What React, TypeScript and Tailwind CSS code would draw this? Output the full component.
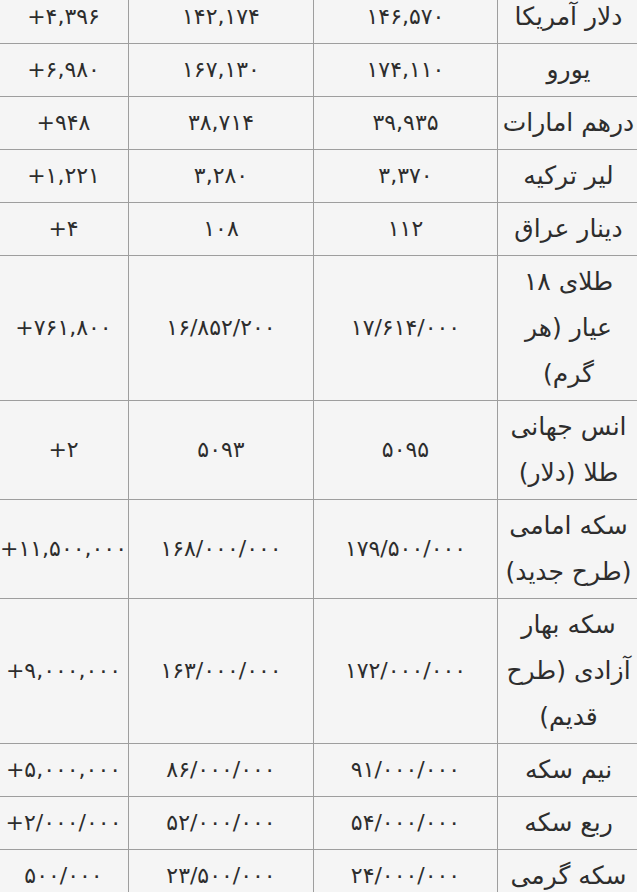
import React from "react"

interface Rate {
  name: string[]
  price: string
  prev: string
  change: string
}

const rates: Rate[] = [
  { name: ["دلار آمریکا"], price: "۱۴۶,۵۷۰", prev: "۱۴۲,۱۷۴", change: "+۴,۳۹۶" },
  { name: ["یورو"], price: "۱۷۴,۱۱۰", prev: "۱۶۷,۱۳۰", change: "+۶,۹۸۰" },
  { name: ["درهم امارات"], price: "۳۹,۹۳۵", prev: "۳۸,۷۱۴", change: "+۹۴۸" },
  { name: ["لیر ترکیه"], price: "۳,۳۷۰", prev: "۳,۲۸۰", change: "+۱,۲۲۱" },
  { name: ["دینار عراق"], price: "۱۱۲", prev: "۱۰۸", change: "+۴" },
  { name: ["طلای ۱۸", "عیار (هر", "گرم)"], price: "۱۷/۶۱۴/۰۰۰", prev: "۱۶/۸۵۲/۲۰۰", change: "+۷۶۱,۸۰۰" },
  { name: ["انس جهانی", "طلا (دلار)"], price: "۵۰۹۵", prev: "۵۰۹۳", change: "+۲" },
  { name: ["سکه امامی", "(طرح جدید)"], price: "۱۷۹/۵۰۰/۰۰۰", prev: "۱۶۸/۰۰۰/۰۰۰", change: "+۱۱,۵۰۰,۰۰۰" },
  { name: ["سکه بهار", "آزادی (طرح", "قدیم)"], price: "۱۷۲/۰۰۰/۰۰۰", prev: "۱۶۳/۰۰۰/۰۰۰", change: "+۹,۰۰۰,۰۰۰" },
  { name: ["نیم سکه"], price: "۹۱/۰۰۰/۰۰۰", prev: "۸۶/۰۰۰/۰۰۰", change: "+۵,۰۰۰,۰۰۰" },
  { name: ["ربع سکه"], price: "۵۴/۰۰۰/۰۰۰", prev: "۵۲/۰۰۰/۰۰۰", change: "+۲/۰۰۰/۰۰۰" },
  { name: ["سکه گرمی"], price: "۲۴/۰۰۰/۰۰۰", prev: "۲۳/۵۰۰/۰۰۰", change: "۵۰۰/۰۰۰" },
]

const cell = "border border-[#9e9e9e] px-0 py-[3px] align-middle whitespace-nowrap"

export default function App() {
  return (
    <div className="min-h-screen w-full overflow-hidden bg-[#f5f5f5] font-['DejaVu_Sans',sans-serif] text-[#2d2d2d]">
      <table
        dir="rtl"
        className="-mt-[10px] -ml-[2px] w-[641px] table-fixed border-collapse text-center text-[22px] leading-[46px]"
      >
        <colgroup>
          <col className="w-[142px]" />
          <col className="w-[184px]" />
          <col className="w-[185px]" />
          <col className="w-[130px]" />
        </colgroup>
        <tbody>
          {rates.map((rate, i) => (
            <tr key={i}>
              <td className={cell + " text-[25px]"}>
                {rate.name.map((line, j) => (
                  <div key={j}>{line}</div>
                ))}
              </td>
              <td dir="ltr" className={cell}>
                {rate.price}
              </td>
              <td dir="ltr" className={cell}>
                {rate.prev}
              </td>
              <td dir="ltr" className={cell}>
                {rate.change}
              </td>
            </tr>
          ))}
        </tbody>
      </table>
    </div>
  )
}
